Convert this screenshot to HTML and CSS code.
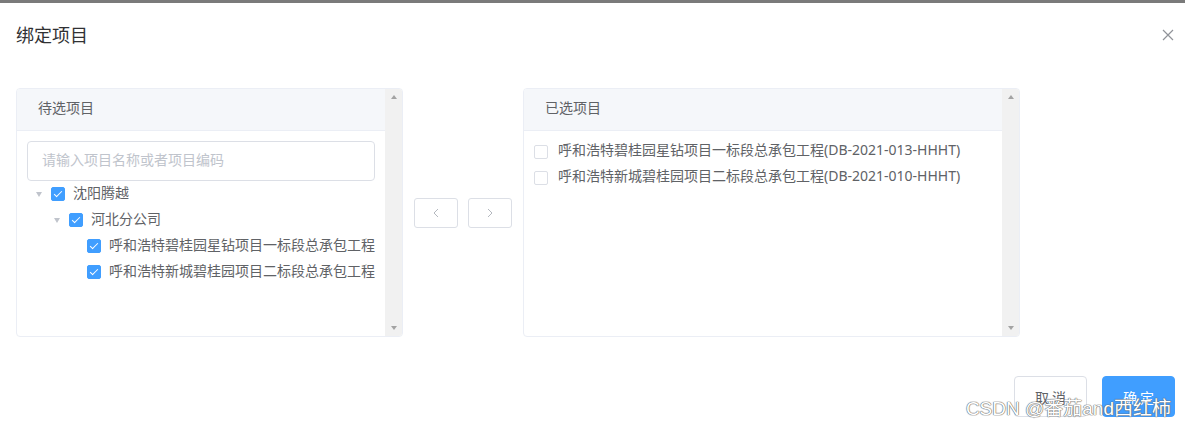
FILE: index.html
```html
<!DOCTYPE html>
<html lang="zh-CN">
<head>
<meta charset="utf-8">
<title>绑定项目</title>
<link rel="stylesheet" href="styles.css">
</head>
<body>
<div class="mask-strip"></div>
<div class="dialog">
  <div class="dialog-header">
    <span class="dialog-title">绑定项目</span>
    <svg class="close" width="12" height="12" viewBox="0 0 12 12"><path d="M1 1L11 11M11 1L1 11" stroke="#909399" stroke-width="1.2" fill="none"/></svg>
  </div>
  <div class="dialog-body">
    <div class="transfer">
      <div class="panel panel-left">
        <div class="panel-main">
          <div class="panel-header">待选项目</div>
          <div class="panel-body pad">
            <div class="search">请输入项目名称或者项目编码</div>
            <div class="tree">
              <div class="node lvl1"><span class="caret"><i></i></span><span class="cb checked"></span><span class="label">沈阳腾越</span></div>
              <div class="node lvl2"><span class="caret"><i></i></span><span class="cb checked"></span><span class="label">河北分公司</span></div>
              <div class="node lvl3"><span class="caret"></span><span class="cb checked"></span><span class="label">呼和浩特碧桂园星钻项目一标段总承包工程</span></div>
              <div class="node lvl3"><span class="caret"></span><span class="cb checked"></span><span class="label">呼和浩特新城碧桂园项目二标段总承包工程</span></div>
            </div>
          </div>
        </div>
        <div class="scrollbar"><span class="arrow up"></span><span class="arrow down"></span></div>
      </div>
      <div class="buttons">
        <div class="tbtn"><svg width="6" height="10" viewBox="0 0 6 10"><path d="M5 1L1 5L5 9" stroke="#b4b8bf" stroke-width="1" fill="none"/></svg></div>
        <div class="tbtn"><svg width="6" height="10" viewBox="0 0 6 10"><path d="M1 1L5 5L1 9" stroke="#b4b8bf" stroke-width="1" fill="none"/></svg></div>
      </div>
      <div class="panel panel-right">
        <div class="panel-main">
          <div class="panel-header">已选项目</div>
          <div class="panel-body list">
            <div class="item"><span class="cb"></span><span class="label">呼和浩特碧桂园星钻项目一标段总承包工程(DB-2021-013-HHHT)</span></div>
            <div class="item"><span class="cb"></span><span class="label">呼和浩特新城碧桂园项目二标段总承包工程(DB-2021-010-HHHT)</span></div>
          </div>
        </div>
        <div class="scrollbar"><span class="arrow up"></span><span class="arrow down"></span></div>
      </div>
    </div>
  </div>
  <div class="dialog-footer">
    <div class="btn btn-default">取消</div>
    <div class="btn btn-primary">确定</div>
  </div>
  <div class="watermark">CSDN @番茄and西红柿</div>
</div>
</body>
</html>
```
FILE: styles.css
```css
* { box-sizing: border-box; }
html, body { margin: 0; padding: 0; background: #fff; }
body {
  width: 1185px;
  height: 427px;
  overflow: hidden;
  font-family: "Noto Sans", "Noto Sans CJK SC", sans-serif;
  font-size: 14px;
  color: #606266;
}
.mask-strip { height: 3px; background: #7a7a7a; }
.dialog { position: relative; height: 424px; }
.dialog-header {
  display: flex;
  justify-content: space-between;
  align-items: center;
  height: 43px;
  padding: 19px 11px 0 16px;
}
.dialog-title {
  font-family: "Noto Sans CJK SC", sans-serif;
  font-size: 18px;
  line-height: 24px;
  color: #303133;
}
.close { display: block; margin-top: 2px; }
.dialog-body { padding: 42px 0 0 16px; }
.transfer { display: flex; align-items: center; }
.panel {
  display: flex;
  height: 249px;
  border: 1px solid #ebeef5;
  border-radius: 4px;
  overflow: hidden;
  background: #fff;
}
.panel-left { width: 387px; }
.panel-right { width: 497px; }
.panel-main { flex: 1; display: flex; flex-direction: column; }
.panel-header {
  height: 42px;
  line-height: 36px;
  background: #f5f7fa;
  border-bottom: 1px solid #ebeef5;
  padding-left: 21px;
  font-family: "Noto Sans CJK SC", sans-serif;
  font-size: 14px;
  color: #606266;
}
.panel-body { flex: 1; }
.pad { padding: 10px 10px 0 10px; }
.search {
  height: 40px;
  border: 1px solid #dcdfe6;
  border-radius: 4px;
  padding-left: 14px;
  line-height: 35px;
  color: #c0c4cc;
  font-family: "Noto Sans CJK SC", sans-serif;
}
.tree { display: flex; flex-direction: column; }
.node { display: flex; align-items: center; height: 26px; }
.lvl2 { padding-left: 18px; }
.lvl3 { padding-left: 36px; }
.caret { width: 24px; height: 26px; display: flex; align-items: center; justify-content: center; }
.caret i {
  width: 0; height: 0;
  border-left: 3.5px solid transparent;
  border-right: 3.5px solid transparent;
  border-top: 5px solid #c0c4cc;
}
.cb {
  flex: none;
  width: 14px; height: 14px;
  border: 1px solid #dcdfe6;
  border-radius: 2px;
  background: #fff;
  position: relative;
}
.cb.checked { background: #409eff; border-color: #409eff; }
.cb.checked::after {
  content: "";
  position: absolute;
  left: 4px; top: 1px;
  width: 3px; height: 7px;
  border: 1px solid #fff;
  border-left: 0; border-top: 0;
  transform: rotate(45deg);
}
.label {
  white-space: nowrap;
  font-family: "Noto Sans CJK SC", sans-serif;
  font-size: 14px;
  line-height: 22px;
  margin-top: -4px;
  color: #606266;
}
.node .cb { margin-right: 8px; }
.list { padding: 8px 0 0 10px; }
.item { display: flex; align-items: center; height: 26px; }
.item .cb { margin-right: 10px; }
.item .label { font-family: "Noto Sans", "Noto Sans CJK SC", sans-serif; }
.scrollbar {
  width: 17px;
  flex: none;
  background: #f1f1f1;
  display: flex;
  flex-direction: column;
  justify-content: space-between;
  align-items: center;
  padding: 6px 0 6px;
}
.arrow { width: 0; height: 0; border-left: 3.5px solid transparent; border-right: 3.5px solid transparent; }
.arrow.up { border-bottom: 4px solid #a3a3a3; }
.arrow.down { border-top: 4px solid #a3a3a3; }
.buttons { display: flex; gap: 10px; margin: 0 11px 0 11px; }
.tbtn {
  width: 44px; height: 30px;
  border: 1px solid #dcdfe6;
  border-radius: 3px;
  display: flex; align-items: center; justify-content: center;
  background: #fff;
}
.dialog-footer {
  display: flex;
  justify-content: flex-end;
  gap: 15px;
  padding: 39px 10px 0 0;
}
.btn {
  width: 73px; height: 41px;
  border-radius: 4px;
  display: flex; align-items: center; justify-content: center;
  font-family: "Noto Sans CJK SC", sans-serif;
  font-size: 14px;
  letter-spacing: 3px;
  text-indent: 3px;
}
.btn-default { border: 1px solid #dcdfe6; color: #606266; background: #fff; }
.btn-primary { background: #409eff; color: #fff; border: 1px solid #409eff; }
.watermark {
  position: absolute;
  right: 14px;
  bottom: 7px;
  font-family: "Liberation Sans", "Noto Sans CJK SC", sans-serif;
  font-size: 19px;
  color: #fff;
  text-shadow: 0 0 1px #666, 0 0 1px #666, 0 0 1px #666;
  white-space: nowrap;
}
```
